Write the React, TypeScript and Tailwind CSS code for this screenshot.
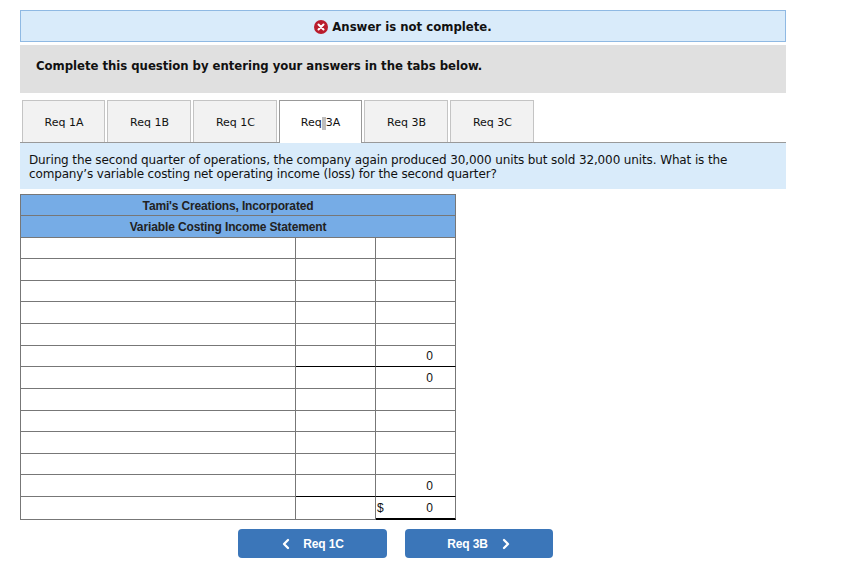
import React from 'react';
import { ChevronLeft, ChevronRight } from 'lucide-react';

const tabs = [
  { label: 'Req 1A', width: 'w-[83px]' },
  { label: 'Req 1B', width: 'w-[84px]' },
  { label: 'Req 1C', width: 'w-[84px]' },
  { label: 'Req 3A', width: 'w-[83px]' },
  { label: 'Req 3B', width: 'w-[84px]' },
  { label: 'Req 3C', width: 'w-[84px]' },
];

interface Row {
  h: string;
  mid?: boolean;
  amount?: string;
  dollar?: boolean;
  last?: boolean;
}

const rows: Row[] = [
  { h: 'h-[21px]' },
  { h: 'h-[22px]' },
  { h: 'h-[21px]' },
  { h: 'h-[22px]' },
  { h: 'h-[22px]' },
  { h: 'h-[21px]', amount: '0', mid: true },
  { h: 'h-[22px]', amount: '0' },
  { h: 'h-[22px]' },
  { h: 'h-[21px]' },
  { h: 'h-[22px]' },
  { h: 'h-[21px]' },
  { h: 'h-[22px]', amount: '0', mid: true },
  { h: 'h-[23px]', amount: '0', dollar: true, last: true },
];

const App: React.FC = () => {
  return (
    <div className="w-[857px] h-[569px] bg-white pl-5 pt-2.5 font-['DejaVu_Sans',sans-serif] text-[#111] overflow-hidden">
      <div className="w-[766px] h-8 bg-[#d9ebfa] border border-[#8fb9e3] flex items-center justify-center gap-1 pt-0.5 text-[13px] font-bold font-['DejaVu_Sans_Condensed',sans-serif]">
        <svg width="14" height="14" viewBox="0 0 14 14">
          <circle cx="7" cy="7" r="7" fill="#b91c2c" />
          <path d="M4.5 4.5l5 5M9.5 4.5l-5 5" stroke="#fff" strokeWidth="2" strokeLinecap="round" />
        </svg>
        <span>Answer is not complete.</span>
      </div>

      <div className="mt-[3px] w-[766px] h-12 bg-[#e0e0e0] pl-4 pt-3 text-[13px] leading-[18px] font-bold font-['DejaVu_Sans_Condensed',sans-serif] tracking-[-0.03px]">
        Complete this question by entering your answers in the tabs below.
      </div>

      <div className="mt-[7px] w-[766px] h-[43px] border-b border-[#999] pl-0.5 flex gap-0.5">
        {tabs.map((tab, i) =>
          i === 3 ? (
            <div
              key={tab.label}
              className={`${tab.width} h-[43px] bg-white border border-b-0 border-[#999] flex items-center justify-center pt-0.5 text-[11px]`}
            >
              <span>Req</span>
              <span className="inline-block w-1 h-[13px] bg-[#bdbdbd]"></span>
              <span>3A</span>
            </div>
          ) : (
            <div
              key={tab.label}
              className={`${tab.width} h-[42px] bg-[#f2f2f2] border border-b-0 border-[#c4c4c4] flex items-center justify-center pt-1 pl-px text-[11px]`}
            >
              {tab.label}
            </div>
          )
        )}
      </div>

      <div className="w-[766px] h-[46px] bg-[#d9ebfa] pl-[9px] pt-2.5 text-xs leading-[14px] tracking-[-0.12px]">
        During the second quarter of operations, the company again produced 30,000 units but sold 32,000 units. What is the
        <br />
        <span className="tracking-[-0.15px]">company’s variable costing net operating income (loss) for the second quarter?</span>
      </div>

      <table className="mt-[5px] w-[436px] table-fixed border-separate border-spacing-0 border-t border-l border-[#777] font-['Liberation_Sans',sans-serif] text-xs">
        <colgroup>
          <col className="w-[275px]" />
          <col className="w-[80px]" />
          <col className="w-[80px]" />
        </colgroup>
        <thead>
          <tr className="h-[21px]">
            <th colSpan={3} className="bg-[#76ace6] border-r border-b border-[#777] p-0 pr-5 pt-0.5 text-center font-bold text-[#222] tracking-[-0.15px]">
              Tami's Creations, Incorporated
            </th>
          </tr>
          <tr className="h-[22px]">
            <th colSpan={3} className="bg-[#76ace6] border-r border-b border-[#777] p-0 pr-5 text-center font-bold text-[#222] tracking-[-0.12px]">
              Variable Costing Income Statement
            </th>
          </tr>
        </thead>
        <tbody>
          {rows.map((row, i) => (
            <tr key={i} className={row.h}>
              <td className="p-0 border-r border-b border-[#777]"></td>
              <td className={`p-0 border-r border-b ${row.mid ? 'border-b-black' : 'border-b-[#777]'} border-r-[#777]`}></td>
              <td
                className={`p-0 border-r border-r-[#777] ${
                  row.last ? 'border-b-2 border-b-black' : row.mid ? 'border-b border-b-black' : 'border-b border-b-[#777]'
                }`}
              >
                <div className="flex justify-between pl-px pr-[22px]">
                  <span>{row.dollar ? '$' : ''}</span>
                  <span>{row.amount}</span>
                </div>
              </td>
            </tr>
          ))}
        </tbody>
      </table>

      <div className="mt-[9px] ml-[218px] flex gap-[18px] font-['Liberation_Sans',sans-serif] text-xs font-bold text-white tracking-[-0.1px]">
        <button className="w-[149px] h-[29px] rounded-sm bg-[#3b76b9] flex items-center justify-center gap-[9px] pr-[3px]">
          <ChevronLeft size={16} strokeWidth={3.5} />
          <span>Req 1C</span>
        </button>
        <button className="w-[148px] h-[29px] rounded-sm bg-[#3b76b9] flex items-center justify-center gap-[10px] pl-[3px]">
          <span>Req 3B</span>
          <ChevronRight size={16} strokeWidth={3.5} />
        </button>
      </div>
    </div>
  );
};

export default App;
